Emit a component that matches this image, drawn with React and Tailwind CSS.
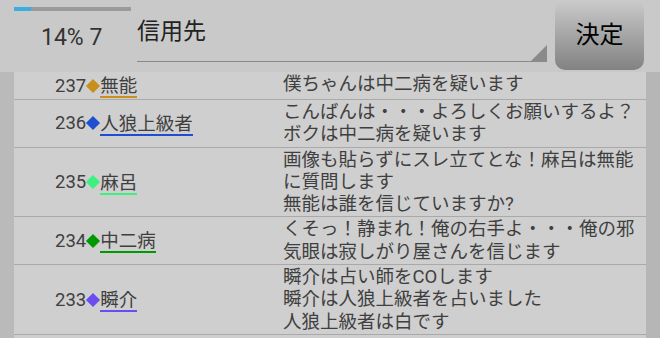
import React from "react";

const rows = [
  { no: 237, name: "無能", color: "#c98f1c", lines: ["僕ちゃんは中二病を疑います"] },
  { no: 236, name: "人狼上級者", color: "#1f4fd0", lines: ["こんばんは・・・よろしくお願いするよ？", "ボクは中二病を疑います"] },
  { no: 235, name: "麻呂", color: "#3ef07f", lines: ["画像も貼らずにスレ立てとな！麻呂は無能", "に質問します", "無能は誰を信じていますか?"] },
  { no: 234, name: "中二病", color: "#009a00", lines: ["くそっ！静まれ！俺の右手よ・・・俺の邪", "気眼は寂しがり屋さんを信じます"] },
  { no: 233, name: "瞬介", color: "#6a4cf0", lines: ["瞬介は占い師をCOします", "瞬介は人狼上級者を占いました", "人狼上級者は白です"] },
];

const Row = ({ no, name, color, lines }) => (
  <div className="flex border-b border-[#a9a9a9] py-px">
    <div className="w-[255px] shrink-0 flex items-center pl-[41px] text-[18.5px] leading-[20px] text-[#3f3f3f]">
      <span>{no}</span>
      <span className="w-[10px] h-[10px] rotate-45 mx-[2px]" style={{ backgroundColor: color }} />
      <span className="border-b-2 pt-[3px]" style={{ borderColor: color }}>{name}</span>
    </div>
    <div className="pl-[14px] text-[18.5px] leading-[22.3px] text-[#3f3f3f] whitespace-nowrap">
      {lines.map((l, i) => (
        <div key={i}>{l}</div>
      ))}
    </div>
  </div>
);

export default function App() {
  return (
    <div className="w-[660px] h-[338px] overflow-hidden bg-[#c9c9c9] flex flex-col" style={{ fontFamily: "Roboto, 'Noto Sans CJK JP', sans-serif" }}>
      <div className="h-[72px] shrink-0 flex">
        <div className="w-[137px] shrink-0 pl-[14px] pt-[7px]">
          <div className="w-[117px] h-[4px] bg-[#9a9a9a]">
            <div className="w-[17px] h-full bg-[#3aaee2]" />
          </div>
          <div className="mt-[13px] pl-[27px] text-[23px] leading-[28px] text-[#333]">14% 7</div>
        </div>
        <div className="w-[410px] shrink-0 h-[62px] border-b border-[#8a8a8a] relative pt-[17px]">
          <div className="text-[23px] leading-[30px] text-[#222]">信用先</div>
          <div className="absolute right-0 bottom-0 w-0 h-0 border-l-[16px] border-l-transparent border-b-[16px] border-b-[#8a8a8a]" />
        </div>
        <div className="ml-[8px] w-[89px] h-[70px] rounded-[10px] bg-gradient-to-b from-[#cbcbcb] to-[#828282] flex items-center justify-center text-[24px] text-black">
          決定
        </div>
      </div>
      <div className="flex flex-1">
        <div className="w-[14px] shrink-0 bg-[#bababa]" />
        <div className="flex-1 bg-[#cfcfcf]">
          {rows.map((r) => (
            <Row key={r.no} {...r} />
          ))}
        </div>
        <div className="w-[14px] shrink-0 bg-[#b6b6b6]" />
      </div>
    </div>
  );
}
